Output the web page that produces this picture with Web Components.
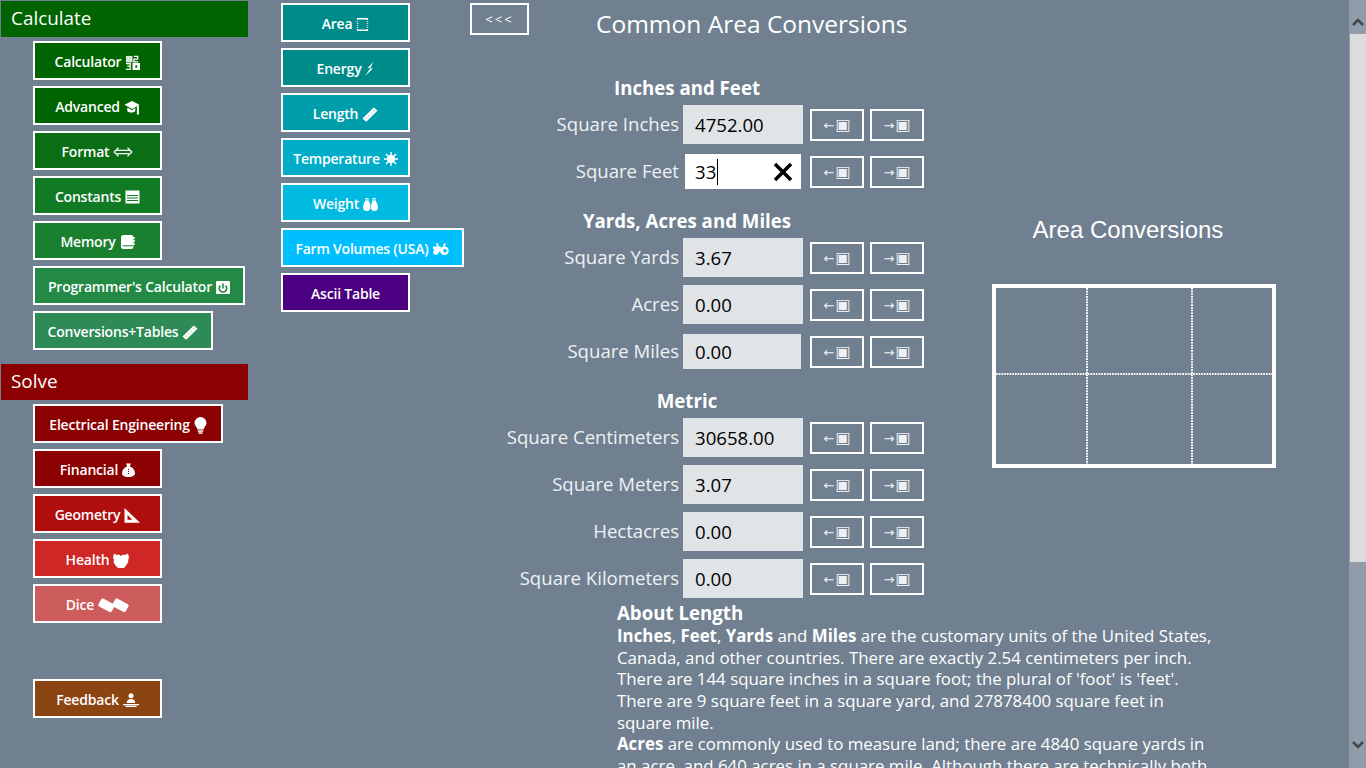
<!DOCTYPE html>
<html>
<head>
<meta charset="utf-8">
<title>Area Conversions</title>
<style>
html, body { margin: 0; height: 100%; overflow: hidden; background: #708090; }
body { font-family: "Open Sans", "Noto Sans", sans-serif; color: #fff; }
</style>
</head>
<body>
<calc-app>
  <nav-group title="Calculate" color="#006400" slot="left">
    <nav-button color="#006400" icon="calc">Calculator</nav-button>
    <nav-button color="#006400" icon="cap">Advanced</nav-button>
    <nav-button color="#0a6e14" icon="format">Format</nav-button>
    <nav-button color="#107a24" icon="table">Constants</nav-button>
    <nav-button color="#1a8030" icon="book">Memory</nav-button>
    <nav-button color="#238a45" icon="power" width="212">Programmer's Calculator</nav-button>
    <nav-button color="#2e8b57" icon="ruler" width="180">Conversions+Tables</nav-button>
  </nav-group>
  <nav-group title="Solve" color="#8b0000" slot="left" style="margin-top:14px">
    <nav-button color="#8b0000" icon="bulb" width="190">Electrical Engineering</nav-button>
    <nav-button color="#8b0000" icon="bag">Financial</nav-button>
    <nav-button color="#b00d0d" icon="square">Geometry</nav-button>
    <nav-button color="#cf2626" icon="heart">Health</nav-button>
    <nav-button color="#cd5c5c" icon="dice">Dice</nav-button>
    <nav-button color="#8b4513" icon="desk" style="margin-top:56px">Feedback</nav-button>
  </nav-group>

  <nav-button slot="units" color="#008b8b" icon="area">Area</nav-button>
  <nav-button slot="units" color="#008b8b" icon="bolt">Energy</nav-button>
  <nav-button slot="units" color="#009eab" icon="ruler">Length</nav-button>
  <nav-button slot="units" color="#00adc9" icon="sun">Temperature</nav-button>
  <nav-button slot="units" color="#00bae2" icon="weight">Weight</nav-button>
  <nav-button slot="units" color="#00bfff" icon="tractor" width="183">Farm Volumes (USA)</nav-button>
  <nav-button slot="units" color="#4b0082">Ascii Table</nav-button>

  <conv-section title="Inches and Feet" slot="conv">
    <conv-row label="Square Inches" value="4752.00"></conv-row>
    <conv-row label="Square Feet" value="33" focused></conv-row>
  </conv-section>
  <conv-section title="Yards, Acres and Miles" slot="conv">
    <conv-row label="Square Yards" value="3.67"></conv-row>
    <conv-row label="Acres" value="0.00"></conv-row>
    <conv-row label="Square Miles" value="0.00" short></conv-row>
  </conv-section>
  <conv-section title="Metric" slot="conv">
    <conv-row label="Square Centimeters" value="30658.00"></conv-row>
    <conv-row label="Square Meters" value="3.07"></conv-row>
    <conv-row label="Hectacres" value="0.00"></conv-row>
    <conv-row label="Square Kilometers" value="0.00"></conv-row>
  </conv-section>

  <area-graph slot="graph" title="Area Conversions"></area-graph>

  <about-text slot="about" title="About Length">
    <b>Inches</b>, <b>Feet</b>, <b>Yards</b> and <b>Miles</b> are the customary units of the United States,<br>
    Canada, and other countries. There are exactly 2.54 centimeters per inch.<br>
    There are 144 square inches in a square foot; the plural of 'foot' is 'feet'.<br>
    There are 9 square feet in a square yard, and 27878400 square feet in<br>
    square mile.<br>
    <b>Acres</b> are commonly used to measure land; there are 4840 square yards in<br>
    an acre, and 640 acres in a square mile. Although there are technically both
  </about-text>
</calc-app>

<script>
// icons are all drawn by hand, --bg is the colour of the button behind them
const ICONS = {
    calc: [15, 15, '0 0 16 16', '<rect x="1" y="1" width="7" height="7" opacity=".85"/><path d="M9.500 1.500h4v2.800h-4v3h4.500M1 9.200h4.500v2.600h-3h3v3.500H1" fill="none" stroke="currentColor" stroke-width="1.400"/><rect x="8" y="8.500" width="8" height="7.500"/><rect x="11" y="11" width="2" height="2.500" fill="var(--bg)"/>'],
    cap: [16, 15, '0 0 16 16', '<path d="M8 1 16 5 8 9.500 0 5z"/><path d="M3 8v4c2 1.800 6.500 1.800 8.500 0V8L8 10.800z"/><rect x="13.200" y="6" width="2.200" height="9.500"/>'],
    format: [20, 10, '0 0 20 10', '<path d="M4 3.400h12M4 6.600h12M5.500 .6 1.200 5l4.300 4.400M14.500 .6 18.800 5l-4.300 4.400" fill="none" stroke="currentColor" stroke-width="1.300"/>'],
    table: [15, 14, '0 0 15 14', '<rect x=".5" y=".5" width="14" height="13"/><path d="M2 5.500h11M2 8h11M2 10.500h11" stroke="var(--bg)" stroke-width="1.200"/>'],
    book: [15, 14, '0 0 15 14', '<rect x="1" y="0" width="12.500" height="14" rx="2.500"/><path d="M2.500 10.800h11" stroke="var(--bg)" stroke-width="1"/><path d="M13 3h2M13 6h2M13 9h2" stroke="currentColor" stroke-width="1.400"/>'],
    power: [14, 13, '0 0 14 13', '<rect width="14" height="13" rx="1"/><path d="M4.400 4.600a3.700 3.700 0 1 0 5.200 0M7 2.500v5" fill="none" stroke="var(--bg)" stroke-width="1.600"/>'],
    ruler: [16, 15, '0 0 16 15', '<path d="M0.500 11.500 11.800.5 15.500 3.800 4.200 14.800z"/><path d="M4 10.600l1 1M6.500 8.200l1 1M9 5.800l1 1M11.500 3.400l1 1" stroke="var(--bg)" stroke-width=".8"/>'],
    bulb: [13, 17, '0 0 13 17', '<path d="M6.500 0a6 6 0 0 0-6 6c0 2.800 2.500 4 3 6.500h6c.5-2.500 3-3.700 3-6.500a6 6 0 0 0-6-6z"/><rect x="3.800" y="13.300" width="5.400" height="1.500"/><rect x="4.500" y="15.300" width="4" height="1.500"/>'],
    bag: [13, 14, '0 0 13 14', '<path d="M4 .5h5L7.800 3.300c3 1.200 5.200 4 5.200 6.700 0 2.800-2.500 4-6.500 4S0 12.800 0 10c0-2.700 2.200-5.500 5.200-6.700z"/><path d="M6.500 6v6" stroke="var(--bg)" stroke-width="1" stroke-dasharray="1 1"/>'],
    square: [16, 15, '0 0 16 15', '<path fill-rule="evenodd" d="M.5 0 16 14.800H.5zM3.500 7v4.800h5z"/>'],
    heart: [16, 15, '0 0 16 15', '<path d="M1 .5 4 2l2-.5 2 1.500 2-1.500 2 .5 3-1.500 1 4-1 3 .5 1-2 3.500L11 15H5l-2.500-2.500L.5 9 1 7 0 4.500z"/>'],
    dice: [31, 15, '0 0 31 15', '<rect x="1" y="2.800" width="15" height="9" rx="2" transform="rotate(28 8.500 7.300)"/><rect x="15" y="2.800" width="15" height="9" rx="2" transform="rotate(28 22.500 7.300)"/>'],
    desk: [16, 14, '0 0 16 14', '<circle cx="8" cy="2.800" r="2.500"/><path d="M3.800 10c0-2.800 1.700-4 4.200-4s4.200 1.200 4.200 4z"/><path d="M0 11h16v1.300H0zM2.500 12.700h11V14h-11z"/>'],
    area: [13, 13, '0 0 13 13', '<path d="M1 .8h11M1 12.200h11" stroke="currentColor" stroke-width="1.400"/><path d="M1.500 1v11M11.500 1v11" stroke="currentColor" stroke-width="1.400" stroke-dasharray="1 1" opacity=".85"/>'],
    bolt: [9, 14, '0 0 9 14', '<path d="M8.500 0 2.500 6H5.500L0 14 8 6.500H5z"/>'],
    sun: [14, 14, '0 0 14 14', '<circle cx="7" cy="7" r="4"/><path d="M7 0v14M0 7h14M2 2l10 10M12 2 2 12" stroke="currentColor" stroke-width="1.500"/>'],
    weight: [15, 13, '0 0 15 13', '<path fill-rule="evenodd" d="M2.500 0h3v2.800c1.200 1.500 2 4 2 6.700C7.500 12 6 13 3.800 13S0 12 0 9.500C0 6.800 1.300 4.300 2.500 2.800zM3.400 1v1.500h1.200V1z"/><path fill-rule="evenodd" d="M9.500 0h3v2.800c1.200 1.500 2.500 4 2.500 6.700 0 2.500-1.500 3.500-3.700 3.500S8 12 8 9.500c0-2.700.5-5.200 1.500-6.700zM10.400 1v1.500h1.200V1z"/>'],
    tractor: [17, 12, '0 0 17 12', '<path fill-rule="evenodd" d="M12 3.500a4.300 4.300 0 1 0 0 8.500 4.300 4.300 0 0 0 0-8.500zM12 6a1.800 1.800 0 1 1 0 3.600A1.800 1.800 0 0 1 12 6z"/><circle cx="2.800" cy="9.200" r="2.500"/><path d="M0 3.500h7.500l1 3L6 9.500H4L1 6.500 0 6zM3 0h1.500l1.500 3.500H4zM11 0l2 1-1.500 3L10 3.500z"/>']
};

class NavIcon extends HTMLElement {
    constructor() {
        super();
        var shadow = this.attachShadow({mode: 'open'});
        let ic = ICONS[this.getAttribute('name')];
        shadow.innerHTML = '<style>:host{display:inline-flex;flex:none;color:#fff}svg{display:block;fill:currentColor}</style>' +
            '<svg width="' + ic[0] + '" height="' + ic[1] + '" viewBox="' + ic[2] + '">' + ic[3] + '</svg>';
    }
}
customElements.define('nav-icon', NavIcon);

class NavButton extends HTMLElement {
    constructor() {
        super();
        var shadow = this.attachShadow({mode: 'open'});
        let color = this.getAttribute('color');
        let width = this.getAttribute('width') || '129';
        let icon = this.getAttribute('icon');
        shadow.innerHTML = '<style>' +
            ':host{display:flex;box-sizing:border-box;width:' + width + 'px;height:39px;margin-bottom:6px;padding-top:3px;' +
            'align-items:center;justify-content:center;gap:4px;border:2px solid #fff;--bg:' + color + ';background:' + color + ';' +
            'color:#fff;font:600 14px/1 "Open Sans","Noto Sans",sans-serif;letter-spacing:-.2px;white-space:nowrap;cursor:pointer}' +
            '</style><slot></slot>' + (icon ? '<nav-icon name="' + icon + '"></nav-icon>' : '');
    }
}
customElements.define('nav-button', NavButton);

class NavGroup extends HTMLElement {
    constructor() {
        super();
        var shadow = this.attachShadow({mode: 'open'});
        let color = this.getAttribute('color');
        shadow.innerHTML = '<style>' +
            ':host{display:block}' +
            '.head{box-sizing:border-box;width:247px;height:36px;margin:0 0 4px 1px;padding-left:10px;background:' + color + ';' +
            'color:#fff;font:400 18.900px/34px "Open Sans","Noto Sans",sans-serif}' +
            '.items{padding-left:33px}' +
            '</style><div class="head">' + this.getAttribute('title') + '</div><div class="items"><slot></slot></div>';
    }
}
customElements.define('nav-group', NavGroup);

class ConvRow extends HTMLElement {
    constructor() {
        super();
        var shadow = this.attachShadow({mode: 'open'});
        let focused = this.hasAttribute('focused');
        let cls = focused ? ' focus' : (this.hasAttribute('short') ? ' short' : '');
        let box = '<div class="input' + cls + '"><span class="val">' + this.getAttribute('value') + '</span>' +
            (focused ? '<svg width="20" height="20" viewBox="0 0 20 20"><path d="M2 2 18 18M18 2 2 18" stroke="#000" stroke-width="3.500"/></svg>' : '') + '</div>';
        shadow.innerHTML = '<style>' +
            ':host{display:grid;grid-template-columns:213px 120px 61px 60px;height:39px;margin-bottom:8px;align-items:center}' +
            '.label{font-size:18.600px;line-height:36px;margin-bottom:2px;text-align:right;color:#eef1f4;white-space:nowrap;padding-right:4px}' +
            '.input{box-sizing:border-box;height:39px;background:#e1e4e7;color:#000;font-size:18.600px;padding-left:12px;display:flex;align-items:center}' +
            '.input.short{height:35px;margin-right:2px}' +
            '.input.focus{height:35px;margin:0 2px;padding-left:10px;background:#fff;position:relative}' +
            '.focus .val{border-right:1px solid #000;line-height:26px;padding-right:1px}' +
            '.focus svg{position:absolute;right:8px;top:8px}' +
            '.go{box-sizing:border-box;height:32px;width:54px;border:2px solid #fff;margin-top:1px;' +
            'color:#eef1f4;display:flex;align-items:center;justify-content:center;font-family:"DejaVu Sans",sans-serif}' +
            '.go1{margin-left:7px}.go2{margin-left:6px}' +
            '.go .a{font-size:13px;line-height:1}.go .b{font-size:16px;line-height:1;margin-left:1px}' +
            '</style><div class="label">' + this.getAttribute('label') + '</div>' + box +
            '<div class="go go1"><span class="a">←</span><span class="b">▣</span></div>' +
            '<div class="go go2"><span class="a">→</span><span class="b">▣</span></div>';
    }
}
customElements.define('conv-row', ConvRow);

class ConvSection extends HTMLElement {
    constructor() {
        super();
        var shadow = this.attachShadow({mode: 'open'});
        shadow.innerHTML = '<style>' +
            ':host{display:block;margin-bottom:18px}' +
            'h3{margin:0 0 5px;width:434px;text-align:center;font:700 18.670px/24px "Open Sans","Noto Sans",sans-serif;color:#fff}' +
            '</style><h3>' + this.getAttribute('title') + '</h3><slot></slot>';
    }
}
customElements.define('conv-section', ConvSection);

class AreaGraph extends HTMLElement {
    constructor() {
        super();
        var shadow = this.attachShadow({mode: 'open'});
        shadow.innerHTML = '<style>' +
            ':host{display:block;width:284px}' +
            '.t{width:272px;text-align:center;font:400 24px/28px "Liberation Sans",Arial,sans-serif;color:#fff;margin-bottom:40px}' +
            'svg{display:block}' +
            '</style><div class="t">' + this.getAttribute('title') + '</div>' +
            '<svg width="284" height="184" viewBox="0 0 284 184">' +
            '<path d="M95 4V180M200 4V180M4 90H280" stroke="#fff" stroke-width="2" stroke-dasharray="1.700 1" fill="none"/>' +
            '<rect x="2" y="2" width="280" height="180" fill="none" stroke="#fff" stroke-width="4"/>' +
            '</svg>';
    }
}
customElements.define('area-graph', AreaGraph);

class AboutText extends HTMLElement {
    constructor() {
        super();
        var shadow = this.attachShadow({mode: 'open'});
        shadow.innerHTML = '<style>' +
            ':host{display:block;margin-left:147px;white-space:nowrap;font-size:16.850px;line-height:21.670px;color:#fff}' +
            'h4{margin:0 0 1px;font:700 18.670px/22px "Open Sans","Noto Sans",sans-serif}' +
            '</style><h4>' + this.getAttribute('title') + '</h4><slot></slot>';
    }
}
customElements.define('about-text', AboutText);

class FakeScrollbar extends HTMLElement {
    constructor() {
        super();
        var shadow = this.attachShadow({mode: 'open'});
        shadow.innerHTML = '<style>' +
            ':host{display:flex;flex-direction:column;height:100%;background:#929ca8}' +
            '.btn{height:46px;display:flex;align-items:center;justify-content:center}' +
            '.up{height:34px;align-items:flex-start;padding-top:17px;box-sizing:border-box}' +
            '.thumb{height:528px;margin-left:1px;background:#dcdcdc}' +
            '.rest{flex:1}' +
            'svg{display:block}' +
            '</style>' +
            '<div class="btn up"><svg width="12" height="9" viewBox="0 0 12 9"><path d="M1 8 6 3l5 5" fill="none" stroke="#3f4750" stroke-width="2.500"/></svg></div>' +
            '<div class="thumb"></div><div class="rest"></div>' +
            '<div class="btn"><svg width="12" height="9" viewBox="0 0 12 9"><path d="M1 1l5 5 5-5" fill="none" stroke="#3f4750" stroke-width="2.500"/></svg></div>';
    }
}
customElements.define('fake-scrollbar', FakeScrollbar);

class CalcApp extends HTMLElement {
    constructor() {
        super();
        var shadow = this.attachShadow({mode: 'open'});
        shadow.innerHTML = '<style>' +
            ':host{display:grid;grid-template-columns:281px 189px 1fr 17px;height:768px;overflow:hidden}' +
            '.left{padding-top:1px}' +
            '.units{padding-top:3px}' +
            '.main{min-width:0;overflow:hidden}' +
            '.top{display:flex;height:76px}' +
            '.back{box-sizing:border-box;width:59px;height:32px;margin-top:3px;border:2px solid #fff;color:#fff;' +
            'display:flex;align-items:center;justify-content:center;font:400 13px/1 "Open Sans",sans-serif;letter-spacing:2px}' +
            'h1{margin:0 0 0 67px;font:400 24.500px/48px "Open Sans","Noto Sans",sans-serif;color:#fff;white-space:nowrap}' +
            '.mid{display:flex;height:526px}' +
            '.conv{width:522px}' +
            '.graph{padding-top:140px}' +
            '</style>' +
            '<div class="left"><slot name="left"></slot></div>' +
            '<div class="units"><slot name="units"></slot></div>' +
            '<div class="main">' +
              '<div class="top"><div class="back">&lt;&lt;&lt;</div><h1>Common Area Conversions</h1></div>' +
              '<div class="mid"><div class="conv"><slot name="conv"></slot></div><div class="graph"><slot name="graph"></slot></div></div>' +
              '<slot name="about"></slot>' +
            '</div>' +
            '<fake-scrollbar></fake-scrollbar>';
    }
}
customElements.define('calc-app', CalcApp);
</script>
</body>
</html>
